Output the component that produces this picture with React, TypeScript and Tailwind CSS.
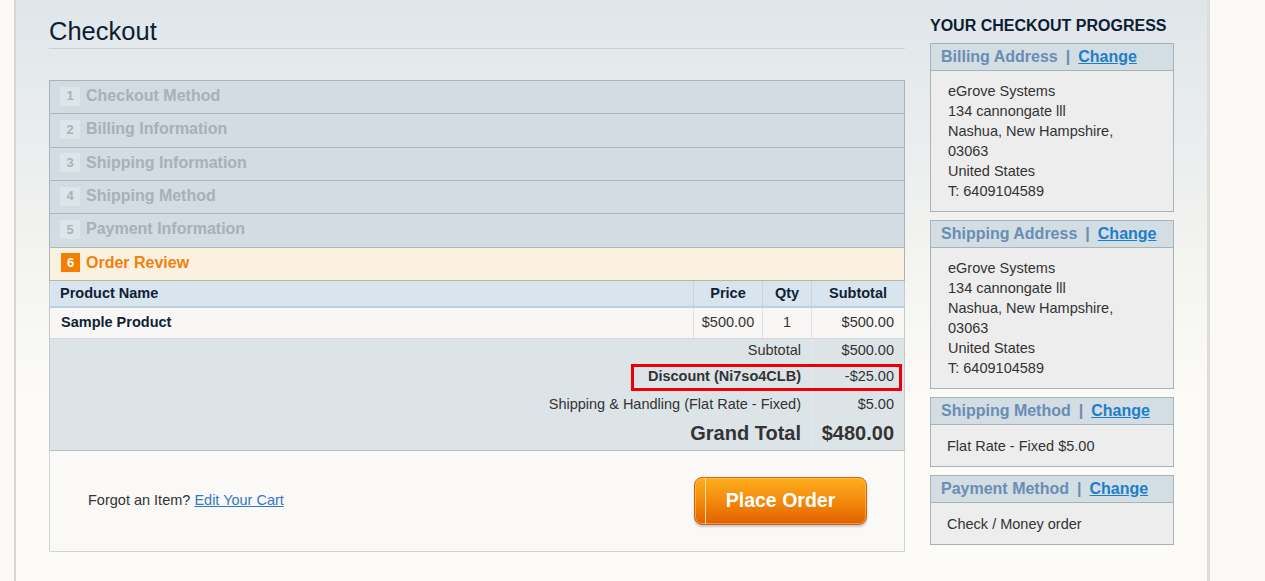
const steps = [
  { n: 1, title: "Checkout Method" },
  { n: 2, title: "Billing Information" },
  { n: 3, title: "Shipping Information" },
  { n: 4, title: "Shipping Method" },
  { n: 5, title: "Payment Information" },
];

const address = [
  "eGrove Systems",
  "134 cannongate lll",
  "Nashua, New Hampshire,",
  "03063",
  "United States",
  "T: 6409104589",
];

const BoxHead = ({ title }: { title: string }) => {
  return (
    <div className="h-[27px] bg-[#d2dde4] border-b border-[#a7b2b9] px-[10px] flex items-center text-[16px] font-bold text-[#6a8db3]">
      <span>{title}</span>
      <span className="mx-[8px]">|</span>
      <a href="#" className="text-[#1e7ec8] underline">
        Change
      </a>
    </div>
  );
};

const ProgressBox = ({ title, lines }: { title: string; lines: string[] }) => {
  const single = lines.length === 1;
  return (
    <div className="border border-[#a7b2b9] bg-[#ededed]">
      <BoxHead title={title} />
      <div
        className={
          single
            ? "pl-[16px] pr-2 pt-[11px] pb-[10px] text-[14.5px] leading-[20px] text-[#333]"
            : "pl-[17px] pr-2 py-[10px] text-[14.5px] leading-[20px] text-[#333]"
        }
      >
        {lines.map((l, i) => (
          <div key={i}>{l}</div>
        ))}
      </div>
    </div>
  );
};

const Steps = () => {
  return (
    <div className="mt-[31px] border border-b-0 border-[#a9b3b9]">
      {steps.map((s) => (
        <div
          key={s.n}
          className="h-[33.33px] border-b border-[#aeb7bd] bg-[#d2dce2] flex items-center pl-[10px] pb-[2px] gap-[6px]"
        >
          <span className="w-[20px] h-[19px] bg-[#dde5e9] flex items-center justify-center text-[13px] font-bold text-[#a8b2b8]">
            {s.n}
          </span>
          <span className="text-[16px] font-bold text-[#a7b1b7]">{s.title}</span>
        </div>
      ))}
      <div className="h-[33.33px] border-b border-[#bfb4a4] bg-[#faf1e1] flex items-center pl-[11px] pb-[2px] gap-[6px]">
        <span className="w-[19px] h-[19px] bg-[#f27f00] flex items-center justify-center text-[13px] font-bold text-white">
          6
        </span>
        <span className="text-[16px] font-bold text-[#f3800b]">Order Review</span>
      </div>
    </div>
  );
};

const ReviewTable = () => {
  return (
    <div className="border-x border-[#c3c9cd] text-[14.5px]">
      <div className="flex h-[27px] bg-[#d8e4ee] border-b-2 border-[#bcd0e0] font-bold text-[#0f1f36]">
        <div className="flex-1 pl-[10px] flex items-center">Product Name</div>
        <div className="w-[69px] border-l border-[#c5d6e3] flex items-center justify-center">Price</div>
        <div className="w-[49px] border-l border-[#c5d6e3] flex items-center justify-center">Qty</div>
        <div className="w-[93px] border-l border-[#c5d6e3] flex items-center justify-center">Subtotal</div>
      </div>
      <div className="flex h-[31px] bg-[#f8f7f5] border-b border-[#d4d9dc] text-[#333]">
        <div className="flex-1 pl-[11px] flex items-center font-bold text-[#0f1f36]">Sample Product</div>
        <div className="w-[69px] border-l border-[#dfe1e6] flex items-center justify-center">$500.00</div>
        <div className="w-[49px] border-l border-[#dfe1e6] flex items-center justify-center">1</div>
        <div className="w-[93px] border-l border-[#dfe1e6] flex items-center justify-end pr-[10px]">$500.00</div>
      </div>
      <div className="relative bg-[#dde4e8] border-b border-[#b9bdbf] text-[#333]">
        <div className="absolute left-[581px] top-[25px] w-[271px] h-[27px] border-[3px] border-[#ec0008]" />
        <div className="flex h-[23px]">
          <div className="flex-1 flex items-center justify-end pr-[10px]">Subtotal</div>
          <div className="w-[93px] border-l border-[#e3e8eb] flex items-center justify-end pr-[10px]">$500.00</div>
        </div>
        <div className="flex h-[29px] pt-[1px]">
          <div className="flex-1 flex items-center justify-end pr-[10px] font-bold">Discount (Ni7so4CLB)</div>
          <div className="w-[93px] border-l border-[#e3e8eb] flex items-center justify-end pr-[10px]">-$25.00</div>
        </div>
        <div className="flex h-[27px]">
          <div className="flex-1 flex items-center justify-end pr-[10px]">Shipping &amp; Handling (Flat Rate - Fixed)</div>
          <div className="w-[93px] border-l border-[#e3e8eb] flex items-center justify-end pr-[10px]">$5.00</div>
        </div>
        <div className="flex h-[32px] pb-[1px] text-[20px] font-bold">
          <div className="flex-1 flex items-center justify-end pr-[10px]">Grand Total</div>
          <div className="w-[93px] border-l border-[#e3e8eb] flex items-center justify-end pr-[10px]">$480.00</div>
        </div>
      </div>
    </div>
  );
};

const ReviewButtons = () => {
  return (
    <div className="h-[101px] bg-[#faf9f7] border border-t-0 border-[#d0d4d8] flex items-center justify-between pl-[38px] pr-[37px]">
      <p className="text-[14.5px] text-[#333]">
        Forgot an Item?{" "}
        <a href="#" className="text-[#2f7ac7] underline">
          Edit Your Cart
        </a>
      </p>
      <button className="relative w-[173px] h-[48px] rounded-[8px] border border-[#d86300] bg-gradient-to-b from-[#fdae1d] via-[#f38a0b] to-[#e25f00] shadow-[0_2px_2px_rgba(120,150,180,0.45),inset_0_0_0_1px_rgba(255,200,120,0.5)] text-white text-[19.5px] font-bold">
        <span className="absolute left-[10px] top-0 bottom-0 w-px bg-[#ffd9a0]" />
        Place Order
      </button>
    </div>
  );
};

export default function App() {
  return (
    <div className="min-h-[581px] bg-[#faf9f5] pl-[14px] font-['Liberation_Sans',Arial,sans-serif]">
      <div className="w-[1196px] min-h-[581px] border-l-2 border-[#d7d6d2] border-r-[3px] border-r-[#dedcd8] bg-gradient-to-b from-[#dfe6ea] via-[#f4f4f1] via-[45%] to-[#fcfbf8] to-[70%] flex pl-[33px] pt-[16px]">
        <div className="w-[856px]">
          <h1 className="text-[25.5px] leading-[28px] pt-[1px] pb-[3px] border-b border-[#cfcfd1] text-[#0b1e33]">Checkout</h1>
          <Steps />
          <ReviewTable />
          <ReviewButtons />
        </div>
        <div className="w-[244px] ml-[25px]">
          <h2 className="text-[16px] font-bold leading-[18px] pt-[1px] text-[#0b1e33] uppercase mb-[8px]">Your Checkout Progress</h2>
          <div className="flex flex-col gap-[8px]">
            <ProgressBox title="Billing Address" lines={address} />
            <ProgressBox title="Shipping Address" lines={address} />
            <ProgressBox title="Shipping Method" lines={["Flat Rate - Fixed $5.00"]} />
            <ProgressBox title="Payment Method" lines={["Check / Money order"]} />
          </div>
        </div>
      </div>
    </div>
  );
}
